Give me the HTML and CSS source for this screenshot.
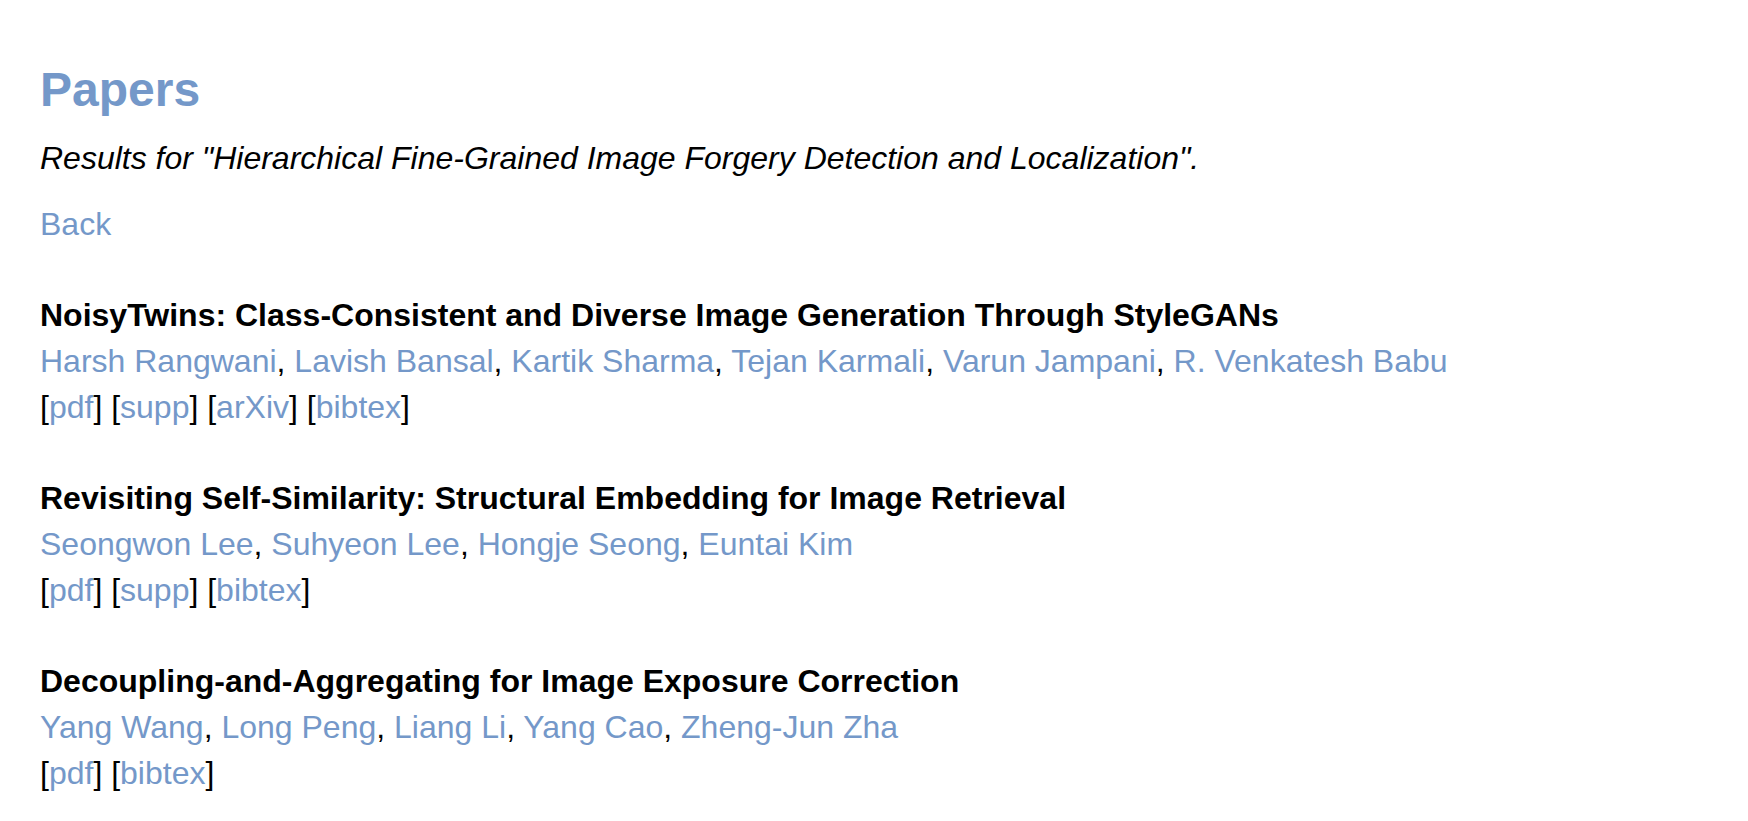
FILE: index.html
```html
<!DOCTYPE html>
<html lang="en">
<head>
<meta charset="utf-8">
<title>Papers</title>
<link rel="stylesheet" href="styles.css">
</head>
<body>
<div class="page">
  <h1 class="heading">Papers</h1>
  <p class="query">Results for "Hierarchical Fine-Grained Image Forgery Detection and Localization".</p>
  <p class="back"><a href="#">Back</a></p>

  <div class="results">
    <div class="paper">
      <div class="title">NoisyTwins: Class-Consistent and Diverse Image Generation Through StyleGANs</div>
      <div class="authors"><a href="#">Harsh Rangwani</a>, <a href="#">Lavish Bansal</a>, <a href="#">Kartik Sharma</a>, <a href="#">Tejan Karmali</a>, <a href="#">Varun Jampani</a>, <a href="#">R. Venkatesh Babu</a></div>
      <div class="links">[<a href="#">pdf</a>] [<a href="#">supp</a>] [<a href="#">arXiv</a>] [<a href="#">bibtex</a>]</div>
    </div>
    <div class="paper">
      <div class="title">Revisiting Self-Similarity: Structural Embedding for Image Retrieval</div>
      <div class="authors"><a href="#">Seongwon Lee</a>, <a href="#">Suhyeon Lee</a>, <a href="#">Hongje Seong</a>, <a href="#">Euntai Kim</a></div>
      <div class="links">[<a href="#">pdf</a>] [<a href="#">supp</a>] [<a href="#">bibtex</a>]</div>
    </div>
    <div class="paper">
      <div class="title">Decoupling-and-Aggregating for Image Exposure Correction</div>
      <div class="authors"><a href="#">Yang Wang</a>, <a href="#">Long Peng</a>, <a href="#">Liang Li</a>, <a href="#">Yang Cao</a>, <a href="#">Zheng-Jun Zha</a></div>
      <div class="links">[<a href="#">pdf</a>] [<a href="#">bibtex</a>]</div>
    </div>
  </div>
</div>
</body>
</html>
```

FILE: styles.css
```css
html, body {
  margin: 0;
  padding: 0;
  background: #ffffff;
}

body {
  font-family: Arial, "Liberation Sans", sans-serif;
  font-size: 32px;
  line-height: 46px;
  color: #000000;
}

a {
  color: #7498c9;
  text-decoration: none;
}

.page {
  padding: 62px 40px 0 40px;
}

.heading {
  margin: 0;
  font-size: 48px;
  line-height: 56px;
  font-weight: bold;
  color: #7498c9;
}

.query {
  margin: 17px 0 0 0;
  font-style: italic;
}

.back {
  margin: 20px 0 0 0;
}

.results {
  margin-top: 45px;
}

.paper {
  margin-bottom: 45px;
}

.title {
  font-weight: bold;
}
```
